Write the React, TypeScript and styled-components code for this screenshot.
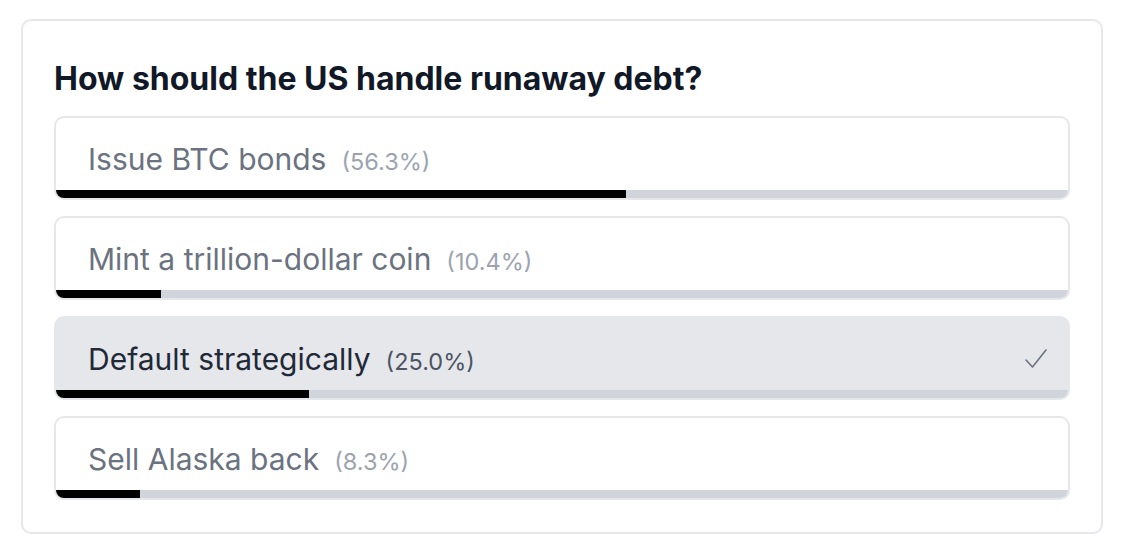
import React from 'react'
import styled, { createGlobalStyle } from 'styled-components'

const GlobalStyle = createGlobalStyle`
  body {
    margin: 0;
    background: #ffffff;
    font-family: Inter, "Noto Sans", sans-serif;
  }
`

const Card = styled.div`
  box-sizing: border-box;
  width: 1082px;
  margin: 19px 0 0 21px;
  padding: 38px 31px 32px 31px;
  border: 2px solid #e5e7eb;
  border-radius: 10px;
  background: #ffffff;
`

const Title = styled.h2`
  margin: 0 0 17px 0;
  font-size: 32px;
  line-height: 40px;
  font-weight: 700;
  color: #111827;
`

const OptionList = styled.div`
  display: flex;
  flex-direction: column;
  gap: 16px;
`

const Option = styled.div<{ $selected?: boolean }>`
  display: flex;
  flex-direction: column;
  border: 2px solid #e5e7eb;
  border-radius: 10px;
  overflow: hidden;
  background: ${({ $selected }) => ($selected ? '#e5e7eb' : '#ffffff')};
`

const Label = styled.div`
  height: 72px;
  box-sizing: border-box;
  padding: 10px 19px 0 32px;
  display: flex;
  align-items: center;
  justify-content: space-between;
`

const LabelText = styled.span<{ $selected?: boolean }>`
  font-size: 30px;
  color: ${({ $selected }) => ($selected ? '#1f2937' : '#6b7280')};
`

const Percent = styled.span<{ $selected?: boolean }>`
  margin-left: 15px;
  font-size: 23.5px;
  color: ${({ $selected }) => ($selected ? '#4b5563' : '#9ca3af')};
`

const Track = styled.div`
  height: 8px;
  background: #d1d5db;
`

const Fill = styled.div`
  height: 100%;
  background: #000000;
`

const Check = () => (
  <svg width="26" height="24" viewBox="0 0 26 24" fill="none">
    <path d="M3 13 L9.5 20 L23 3" stroke="#6b7280" strokeWidth="1.6" strokeLinecap="round" strokeLinejoin="round" />
  </svg>
)

const options = [
  { label: 'Issue BTC bonds', pct: 56.3 },
  { label: 'Mint a trillion-dollar coin', pct: 10.4 },
  { label: 'Default strategically', pct: 25.0, selected: true },
  { label: 'Sell Alaska back', pct: 8.3 },
]

export default function App() {
  return (
    <>
      <GlobalStyle />
      <Card>
        <Title>How should the US handle runaway debt?</Title>
        <OptionList>
          {options.map((o) => (
            <Option key={o.label} $selected={o.selected}>
              <Label>
                <span>
                  <LabelText $selected={o.selected}>{o.label}</LabelText>
                  <Percent $selected={o.selected}>({o.pct.toFixed(1)}%)</Percent>
                </span>
                {o.selected && <Check />}
              </Label>
              <Track>
                <Fill style={{ width: `${o.pct}%` }} />
              </Track>
            </Option>
          ))}
        </OptionList>
      </Card>
    </>
  )
}
